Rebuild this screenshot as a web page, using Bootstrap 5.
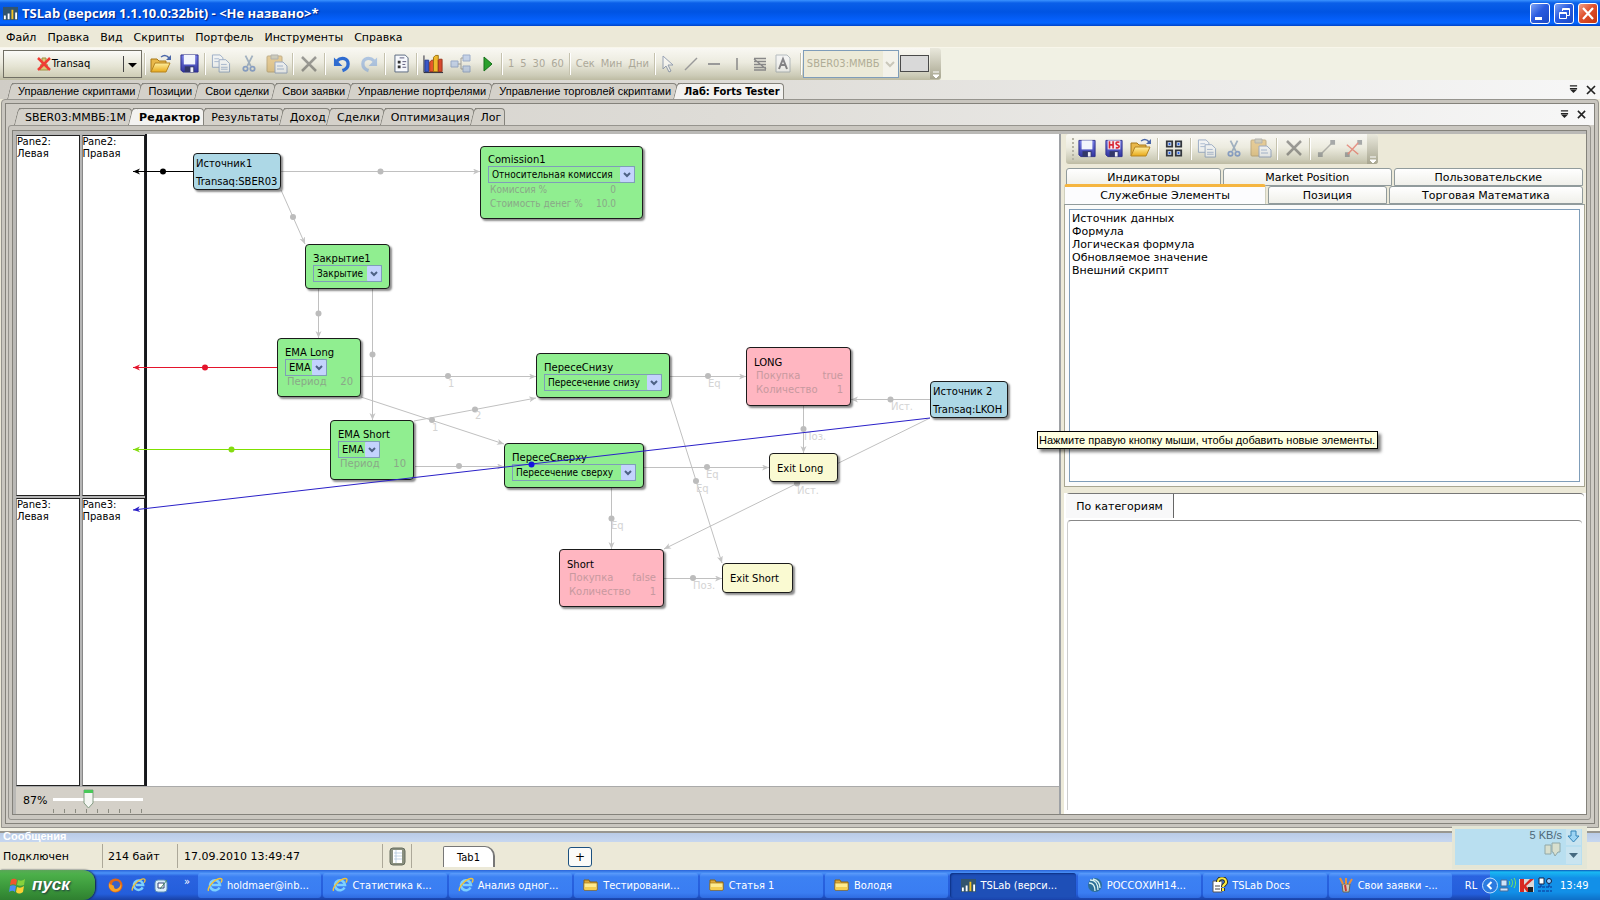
<!DOCTYPE html>
<html lang="ru">
<head>
<meta charset="utf-8">
<meta name="viewport" content="width=device-width, initial-scale=1">
<title>TSLab</title>
<link href="https://cdn.jsdelivr.net/npm/bootstrap@5.3.0/dist/css/bootstrap.min.css" rel="stylesheet">
<style>
:root{--ui:"DejaVu Sans",Verdana,sans-serif;--cond:"DejaVu Sans Condensed","DejaVu Sans",Tahoma,sans-serif;--tight:"Liberation Sans",Tahoma,sans-serif;--face:#d4d0c8;--line:#85837c}
body{font:11px/13px var(--ui);color:#000;background:#ece9d8;overflow:hidden}
button,select{font:inherit;color:inherit;background:none;border:0;padding:0;margin:0;line-height:inherit;white-space:nowrap}
a{color:inherit;text-decoration:none}
svg{display:block;flex:none}
.cond{font-family:var(--cond)}
/* title bar */
.titlebar{height:26px;background:linear-gradient(#3b93ff 0,#0a5fe8 3px,#0054e3 12px,#0560fb 20px,#0366ff 23px,#0043c8 26px);color:#fff;padding:0 2px 0 3px}
.titlebar h1{font:bold 13px/26px "Open Sans",Tahoma,sans-serif;text-shadow:1px 1px 1px #0a1f7a;margin:0}
.winbtn{width:20px;height:21px;border:1px solid #fff;border-radius:3px;background:linear-gradient(135deg,#7fa4f5,#2a5be0 45%,#1c49c4)}
.winbtn.quit{background:linear-gradient(135deg,#f0a088,#e0502c 45%,#c43510)}
/* menu + toolbar */
.menurow{height:21px;padding-left:6px;gap:11px;background:#ece9d8}
.menurow a{line-height:23px}
.toolrow{height:33px;background:#f1f1e4;border-top:1px solid #f8f6ea}
.toolgrad{background:linear-gradient(#f9f8f3,#ecebdf 45%,#cdccb8 85%,#bdbba3);border-radius:0 3px 3px 0}
.mainbar{height:32px;width:941px;padding:0 0 1px 3px}
.transaq{width:139px;height:28px;border:1px solid #716f64;background:linear-gradient(#fbfbf8,#e4e3d2 60%,#cfcdb6)}
.transaq button:first-child{flex:1;height:100%;gap:1px}
.transaq button:last-child{width:18px;height:16px;border-left:1px solid #444}
.tb{width:28px;height:28px;display:flex;align-items:center;justify-content:center}
.tb.slim{width:23px}
.tb.run{width:25px}
.vr2{width:4px;height:22px;flex:none;background:linear-gradient(90deg,transparent 1px,#c5c2ae 1px,#c5c2ae 2px,#fff 2px,#fff 3px,transparent 3px)}
.transaq + .vr2{margin-left:1px}
.off{opacity:.5}
.graytxt{color:#aca899;font-family:var(--cond)}
.symbolbox{width:96px;height:28px;border:1px solid #7f9db9;border-radius:0;appearance:none;color:#b0ad96;padding-left:3px;opacity:1;font-family:var(--cond);
 background:url("data:image/svg+xml,%3Csvg xmlns='http://www.w3.org/2000/svg' width='15' height='26'%3E%3Crect width='15' height='26' fill='%23f3f2ea'/%3E%3Cpath d='M3 11l4 4 4-4' fill='none' stroke='%23c9c7ba' stroke-width='2'/%3E%3C/svg%3E") right center no-repeat #ecead8}
.swatch{width:29px;height:17px;border:1px solid #4a4a4a;background:#d9d9d9;margin-left:1px}
.endcap{width:11px;height:100%;background:linear-gradient(#e9e8dc,#a8a690);border-radius:0 3px 3px 0}
/* skewed document tabs */
.tabstrip{background:linear-gradient(90deg,#d0cdc6,#dedcd7 45%,#f7f7f7)}
.strip1{height:19px;padding-left:11px;font-family:var(--tight)}
.strip2{height:21px;padding-left:11px}
.doctab{position:relative;height:16px;border:1px solid var(--line);border-width:1px 1px 0 0;border-radius:0 4px 0 0;padding:0 5px 0 6px;margin-left:1px;background:#d4d1ca;flex:none}
.doctab::before{content:"";position:absolute;left:-3px;top:-1px;bottom:0;width:6px;border:1px solid var(--line);border-width:1px 0 0 1px;border-radius:4px 0 0 0;transform:skewX(-14deg);background:inherit}
.doctab span{position:relative}
.doctab.active{background:#f3f2f0;font-weight:bold;z-index:1}
.strip1 .active{font-family:var(--cond);padding:0 3px 0 6px}
.strip2 .doctab{height:17px;padding:0 3px 0 6px}
.strip2 .doctab:first-child{margin-left:2px;padding-right:5px}
/* nested frames */
.frame1{border:1px solid #96948e;border-radius:4px 4px 0 0;margin:0 1px;padding:3px;background:#c9c6bf;min-height:0}
.frame2{border:1px solid #84827b;background:#d0cdc6;min-height:0}
.frame3{border:1px solid #96948e;border-radius:3px;margin:0 3px 3px 2px;padding:4px 3px 4px;background:#cac7c0;min-height:0}
.frame4{border:1px solid #84827b;padding:3px 0 0 3px;background:#bab9b6;min-height:0}
.editor{background:#fff;min-width:0;min-height:0}
.board{position:relative;overflow:hidden;min-height:0}
.panes{width:131px;display:grid;grid-template-columns:1fr 1fr;grid-template-rows:361px 1fr;gap:2px;background:#b5b5b5;border-right:2px solid #15171c;padding-top:1px;font-size:10px;line-height:12px}
.panes div{background:#fff;border:1px solid #222;border-left-color:#888}
.zoombar{height:28px;background:var(--face);border-top:1px solid #aaa;padding-left:7px}
.zoomctl{width:90px;margin-left:6px}
.zoomctl input{appearance:none;display:block;width:90px;height:20px;margin:0;background:linear-gradient(transparent 9px,#fff 9px,#fff 12px,transparent 12px)}
.zoomctl input::-webkit-slider-thumb{appearance:none;width:11px;height:20px;background:url("data:image/svg+xml,%3Csvg xmlns='http://www.w3.org/2000/svg' width='11' height='20'%3E%3Cpath d='M1 1h9v13l-4.500 5L1 14z' fill='%23f4f6f2' stroke='%23849c84'/%3E%3Cpath d='M1 1h9v3H1z' fill='%2348c858'/%3E%3C/svg%3E")}
.ticks{height:4px;background:repeating-linear-gradient(90deg,#8a8a80 0,#8a8a80 1px,transparent 1px,transparent 11px)}
/* diagram */
.wires{position:absolute;inset:0;pointer-events:none}
.wires text{font:10px var(--ui);fill:#d4d4d4}
.node{position:absolute;border:1px solid #1b1b1b;border-radius:4px;padding:7px 7px 0;font-size:10px;line-height:13px;box-shadow:2px 2px 2px rgba(0,0,0,.45);white-space:nowrap}
.op{background:#90ee90}.deal{background:#ffb6c1;padding-top:8px}.exitn{background:#fafad2;padding-top:8px}.src{background:#add8e6;padding:3px 2px 0}
.src p{margin:0 0 5px}
.node select{display:block;height:17px;width:100%;border:1px solid #7f9db9;border-radius:0;appearance:none;padding-left:3px;font-size:10px;line-height:14px;font-family:var(--cond);
 background:url("data:image/svg+xml,%3Csvg xmlns='http://www.w3.org/2000/svg' width='14' height='15'%3E%3Crect width='14' height='15' rx='1' fill='%23c3d3fd'/%3E%3Cpath d='M4 6l3 3 3-3' fill='none' stroke='%234d6185' stroke-width='2'/%3E%3C/svg%3E") right center no-repeat}
.node.ema select{width:42px;font-family:var(--ui)}
.node dl{margin:0;line-height:14px;padding:0 0 0 2px;display:grid;grid-template-columns:1fr auto}
.node dl *{margin:0;font-weight:normal;text-align:right}.node dl dt{text-align:left}
.op dl{color:#8aa888}.deal dl{color:#c7999f}
.node.ema dl{line-height:12px}
#src1{left:177px;top:19px;width:88px;height:37px}
#comm{left:464px;top:12px;width:163px;height:73px;padding-top:6px}
#comm dl{padding-right:19px;font-family:var(--cond)}
#close1{left:289px;top:110px;width:85px;height:45px}
#emaL{left:261px;top:204px;width:84px;height:59px}
#emaS{left:314px;top:286px;width:84px;height:60px}
#up{left:520px;top:219px;width:134px;height:45px}
#down{left:488px;top:309px;width:140px;height:45px}
#long{left:730px;top:213px;width:105px;height:59px}
#short{left:543px;top:415px;width:105px;height:58px}
#src2{left:914px;top:247px;width:78px;height:37px}
#exitL{left:753px;top:319px;width:69px;height:29px}
#exitS{left:706px;top:429px;width:71px;height:30px}
/* right side */
.side{width:527px;flex:none;background:#ece9d8;border-left:2px solid #9ea1a5;padding:0 0 0 3px;min-height:0}
.sidebar2{height:30px;width:312px;margin-left:2px;padding-left:6px;border-radius:3px}
.grip{width:2px;height:22px;background:repeating-linear-gradient(#b5b3a5 0,#b5b3a5 2px,transparent 2px,transparent 4px)}
.sidebar2 .tb{width:27px;height:26px;padding-bottom:2px}
.sidebar2 .vr2{margin:0 1px}
.cat{height:18px;border:1px solid #919b9c;border-radius:3px 3px 0 0;background:linear-gradient(#fff,#f0f0ea);text-align:center}
.catrow{gap:2px;padding:0 3px 0 2px}
.cat.sel{background:#fcfcfe;height:20px;margin-top:-2px;border-color:#e5972d #d0d0bf transparent;border-top:3px solid #f5b540;position:relative;flex:0 0 202px!important;line-height:15px;border-bottom:0}
.catpage{border:1px solid #a8a692;border-top-color:#919b9c;background:#fbfbfa;padding:4px;height:283px;margin-right:1px}
.items{border:1px solid #7f9db9;background:#fff;height:273px;padding:2px;margin:0;list-style:none}
.props{background:#fff;margin-top:6px;padding:0 2px;min-height:0}
.proptab{height:24px;width:108px;border-right:1px solid #666;background:#f8f8f9}
.prophead{border-top:1px solid #777;border-radius:4px}
.propbody{border-top:1px solid #888;border-left:1px solid #ccc;border-radius:4px 4px 0 0;margin:2px 2px 4px 1px}
.hint{position:absolute;left:1037px;top:431px;min-width:341px;height:18px;border:1px solid #000;background:#ffffe1;box-shadow:3px 3px 3px rgba(0,0,0,.5);padding:0 1px;line-height:16px;white-space:nowrap;z-index:5;font-family:var(--tight)}
/* bottom */
.msgs{height:14px;border-top:3px solid #f3f1e4;background:linear-gradient(#98968f 2px,#b9cbe6 2px,#c7d7f0);color:#fff;font-weight:bold;padding:0 3px;line-height:11px;font-family:var(--tight)}
.status{height:28px;background:#ece9d8}
.cell{height:24px;line-height:26px;border-right:1px solid #aca899;flex:none}
.sheet{width:52px;height:21px;background:#fff;border:1px solid #777;border-width:1px 2px 0 1px;border-radius:2px 10px 0 0;margin-left:31px;margin-bottom:3px}
.plus{width:24px;height:20px;border:1px solid #1c5180;border-radius:3px;background:#fbfbf8;margin-left:73px;margin-top:2px;font-size:12px}
.speed{position:absolute;right:13px;bottom:31px;width:135px;height:43px;background:#b9dff0;border:2px solid #e4e6d6;border-width:3px 5px 4px 3px;color:#4c6777;z-index:4;font-family:var(--tight)}
.taskbar{height:30px;background:linear-gradient(#2a63d8,#4b93f8 3px,#2a63e0 6px,#245edb 24px,#1941a5);color:#fff;font-family:var(--cond)}
.start{width:95px;height:30px;background:linear-gradient(#5aa658,#4cb04a 4px,#3b983b 18px,#2f7f30);border-radius:0 12px 12px 0;box-shadow:1px 0 2px #123;font:italic bold 17px "Liberation Sans",Arial,sans-serif;color:#fff;text-shadow:1px 1px 2px #234}
.task{flex:1 1 0;min-width:0;height:25px;margin-left:2px;border-radius:3px;background:linear-gradient(#5c9cfb,#3c81f3 4px,#3a7df2 20px,#2f6be0);padding-left:9px;gap:4px;display:flex;align-items:center;color:#fff}
.task.on{background:#1e4fb7;box-shadow:inset 1px 1px 2px #0c2f80;padding-left:11px}
.tray{width:110px;height:30px;background:linear-gradient(#0c59b9,#19b9f3 2px,#1290e8 8px,#1290e8 22px,#0e70c8);position:relative;padding-left:9px;gap:3px}
</style>
</head>
<body class="vh-100 d-flex flex-column position-relative">
<svg width="0" height="0" class="position-absolute" aria-hidden="true">
 <defs>
  <linearGradient id="gy" x2="0" y2="1"><stop stop-color="#fff0a0"/><stop offset="1" stop-color="#e8a818"/></linearGradient>
  <linearGradient id="gb" x2="0" y2="1"><stop stop-color="#7a80e8"/><stop offset="1" stop-color="#3034a0"/></linearGradient>
  <symbol id="i-open" viewBox="0 0 22 20"><path d="M1 18V5h6l2 2h7v3" fill="#e9b84a" stroke="#a87818"/><path d="M1 18L5 9h15l-4 9z" fill="url(#gy)" stroke="#b58420"/><path d="M11 3c3-2 6-2 8 1" fill="none" stroke="#4a66a8" stroke-width="1.500"/><path d="M21 1v5h-5z" fill="#4a66a8"/></symbol>
  <symbol id="i-save" viewBox="0 0 20 20"><path d="M1 1h18v18H3l-2-2z" fill="url(#gb)" stroke="#2a2c88"/><path d="M4 1h12v10H4z" fill="#f2f5fc"/><path d="M5 13h10v6H5z" fill="#333868"/><path d="M11 14h3v5h-3z" fill="#f0f0f8"/></symbol>
  <symbol id="i-savehs" viewBox="0 0 20 20"><path d="M1 1h18v18H3l-2-2z" fill="url(#gb)" stroke="#2a2c88"/><path d="M3 1h14v10H3z" fill="#f4e8ee"/><path d="M5 2v8M9 2v8M5 6h4M16 3c-4-1-5 2-2 3s2 4-2 3" fill="none" stroke="#d82838" stroke-width="1.800"/><path d="M5 13h10v6H5z" fill="#333868"/><path d="M11 14h3v5h-3z" fill="#f0f0f8"/></symbol>
  <symbol id="i-copy" viewBox="0 0 20 20"><g fill="#f2f6ff" stroke="#4b6ea8"><path d="M1 1h8l3 3v10H1z"/><path d="M8 6h7l4 4v9H8z"/></g><path d="M3 5h5M3 8h5M10 11h6M10 14h7M10 16h7" stroke="#6787c0"/></symbol>
  <symbol id="i-cut" viewBox="0 0 16 20"><path d="M4 1l6 12M12 1L6 13" stroke="#55749c" stroke-width="2" fill="none"/><g fill="none" stroke="#3460b4" stroke-width="2"><circle cx="4" cy="16" r="2.500"/><circle cx="12" cy="16" r="2.500"/></g></symbol>
  <symbol id="i-paste" viewBox="0 0 22 20"><rect x="1" y="2" width="15" height="16" rx="1" fill="#d9a648" stroke="#94712c"/><path d="M5 1h7v4H5z" fill="#aaa890" stroke="#777"/><path d="M9 8h8l4 4v7H9z" fill="#eef3ff" stroke="#526fa8"/><path d="M11 12h6M11 15h7" stroke="#6787c0"/></symbol>
  <symbol id="i-del" viewBox="0 0 18 18"><path d="M2 2l14 14M16 2L2 16" stroke="#484848" stroke-width="2.500"/></symbol>
  <symbol id="i-undo" viewBox="0 0 18 18"><path d="M4 6c5-5 12-3 12 3 0 4-3 6-6 7" fill="none" stroke="#2f6cd0" stroke-width="3.500"/><path d="M1 2v9h9z" fill="#2f6cd0"/></symbol>
  <symbol id="i-doc" viewBox="0 0 16 20"><path d="M1 1h11l3 3v15H1z" fill="#f6f8fc" stroke="#56657c"/><path d="M4 7h3v3H4zM4 12h3v3H4z" fill="#333"/><path d="M9 8h4M9 11h3M9 14h4M6 4h5" stroke="#557"/></symbol>
  <symbol id="i-chart" viewBox="0 0 22 20"><path d="M1 1v18h20" stroke="#223" fill="none"/><path d="M2 6h4v12H2z" fill="#3a57c8" stroke="#223a90"/><path d="M7 8l2-2h3v12H7z" fill="#e8552c" stroke="#97361c"/><path d="M11 3l2-2h3v17h-5z" fill="#f0b92c" stroke="#9a7010"/><path d="M16 6l1-1h3v13h-4z" fill="#d8482c" stroke="#97361c"/></symbol>
  <symbol id="i-tree" viewBox="0 0 22 20"><g fill="#9bb6e8" stroke="#4a6cb0"><path d="M1 7h7v6H1zM13 1h7v6h-7zM13 12h7v6h-7z"/></g><path d="M8 10h3M13 4h-2v11h2" fill="none" stroke="#555"/></symbol>
  <symbol id="i-grid" viewBox="0 0 20 20"><g fill="#d9e8ff" stroke="#33363c" stroke-width="2"><path d="M2 2h6v6H2zM12 2h6v6h-6zM2 12h6v6H2zM12 12h6v6h-6z"/></g><path d="M4 4h2v2H4zM14 4h2v2h-2zM4 14h2v2H4zM14 14h2v2h-2z" fill="#2f61d8"/></symbol>
  <symbol id="i-link" viewBox="0 0 20 20"><path d="M4 16L16 4" stroke="#777" stroke-width="1.500"/><path d="M1 14h5v5H1zM14 1h5v5h-5z" fill="#5e646c"/></symbol>
  <symbol id="i-folder" viewBox="0 0 16 14"><path d="M1 12V2h5l1 2h7v8z" fill="#dca838" stroke="#8c6510"/><path d="M1 12V5h13v7z" fill="#fdeb90" stroke="#a87c1c" stroke-width=".7"/><path d="M2 9h11v3H2z" fill="#f4ce50"/></symbol>
  <symbol id="i-ie" viewBox="0 0 16 16"><path d="M12.500 10.500A5 5 0 1 1 13 8H5" fill="none" stroke="#7cd0ff" stroke-width="2.600"/><path d="M1.500 14C0 10 8 2 13 1.500c3-.2 2 2.500 1 4" fill="none" stroke="#f0c33a" stroke-width="1.400"/></symbol>
  <symbol id="i-app" viewBox="0 0 16 16"><path d="M0 1h16v14H0z" fill="#32546e"/><path d="M1 10h2v4H1zM5 8h2v6H5zM13 7h2v7h-2z" fill="#fff"/><path d="M9 4h2v10H9z" fill="#f2c325"/></symbol>
  <symbol id="i-drop" viewBox="0 0 10 10"><path d="M1 1h8M1 4h8" stroke="#222" stroke-width="1.500"/><path d="M1 5h8L5 9z" fill="#222"/></symbol>
  <symbol id="i-x" viewBox="0 0 10 10"><path d="M1 1l8 8M9 1L1 9" stroke="#222" stroke-width="1.700"/></symbol>
  <symbol id="i-more" viewBox="0 0 11 11"><path d="M3 4h6M3 7h6l-3 3z" stroke="#fff" fill="#fff"/></symbol>
 </defs>
</svg>

<header class="titlebar d-flex align-items-center">
 <svg width="15" height="15"><use href="#i-app"/></svg>
 <h1 class="ms-1 flex-grow-1">TSLab (версия 1.1.10.0:32bit) - &lt;Не названо&gt;*</h1>
 <div class="d-flex gap-1">
  <button class="winbtn" aria-label="Свернуть"><svg width="18" height="19"><path d="M4 13h7v3H4z" fill="#fff"/></svg></button>
  <button class="winbtn" aria-label="Восстановить"><svg width="18" height="19" fill="none" stroke="#fff"><path d="M7.500 7V4.500h7v7H12M7 5.500h7"/><path d="M4.500 8.500h7v6h-7zM4 9.500h8"/></svg></button>
  <button class="winbtn quit" aria-label="Закрыть"><svg width="18" height="19"><path d="M4 4l10 11M14 4L4 15" stroke="#fff" stroke-width="2.200"/></svg></button>
 </div>
</header>

<nav class="menurow d-flex">
 <a href="#">Файл</a><a href="#">Правка</a><a href="#">Вид</a><a href="#">Скрипты</a><a href="#">Портфель</a><a href="#">Инструменты</a><a href="#">Справка</a>
</nav>

<div class="toolrow">
 <div class="toolgrad mainbar d-flex align-items-center">
  <div class="transaq d-flex align-items-center">
   <button class="d-flex align-items-center justify-content-center cond"><svg width="14" height="16"><path d="M5 2h4v5H5zM4 8h6l1 6H3z" fill="#d8c878" stroke="#a09040"/><path d="M1 2l12 12M13 2L1 14" stroke="#f03c34" stroke-width="2.500"/></svg>Transaq</button>
   <button aria-label="Меню подключения"><svg width="16" height="14"><path d="M4 6h9l-4.500 4.500z"/></svg></button>
  </div>
  <span class="vr2"></span>
  <button class="tb" aria-label="Открыть"><svg width="22" height="20"><use href="#i-open"/></svg></button>
  <button class="tb" aria-label="Сохранить"><svg width="19" height="19"><use href="#i-save"/></svg></button>
  <span class="vr2"></span>
  <button class="tb off" aria-label="Копировать"><svg width="20" height="19"><use href="#i-copy"/></svg></button>
  <button class="tb off" aria-label="Вырезать"><svg width="14" height="19"><use href="#i-cut"/></svg></button>
  <button class="tb off" aria-label="Вставить"><svg width="22" height="20"><use href="#i-paste"/></svg></button>
  <span class="vr2"></span>
  <button class="tb off" aria-label="Удалить"><svg width="18" height="18"><use href="#i-del"/></svg></button>
  <span class="vr2"></span>
  <button class="tb" aria-label="Отменить"><svg width="17" height="18"><use href="#i-undo"/></svg></button>
  <button class="tb off" aria-label="Повторить"><svg width="17" height="18" viewBox="0 0 18 18"><path d="M14 6C9 1 2 3 2 9c0 4 3 6 6 7" fill="none" stroke="#6f9bdc" stroke-width="3.500"/><path d="M17 2v9H8z" fill="#6f9bdc"/></svg></button>
  <span class="vr2"></span>
  <button class="tb" aria-label="Свойства"><svg width="15" height="19"><use href="#i-doc"/></svg></button>
  <span class="vr2"></span>
  <button class="tb" aria-label="График"><svg width="21" height="20"><use href="#i-chart"/></svg></button>
  <button class="tb off" aria-label="Схема"><svg width="22" height="20"><use href="#i-tree"/></svg></button>
  <button class="tb run" aria-label="Запуск"><svg width="10" height="16"><path d="M1 1l8 7-8 7z" fill="#2aa02c" stroke="#147018"/></svg></button>
  <span class="vr2"></span>
  <div class="d-flex graytxt ps-1" style="gap:6px"><button>1</button><button>5</button><button>30</button><button>60</button></div>
  <span class="vr2 ms-1"></span>
  <div class="d-flex graytxt ps-1" style="gap:6px"><button>Сек</button><button>Мин</button><button>Дни</button></div>
  <span class="vr2 ms-1"></span>
  <button class="tb slim off" aria-label="Указатель"><svg width="14" height="18"><path d="M2 1v13l3-3 3 6 2-1-3-6h5z" fill="#fff" stroke="#445a88"/></svg></button>
  <button class="tb slim" aria-label="Линия"><svg width="14" height="14"><path d="M1 13L13 1" stroke="#999" stroke-width="1.500"/></svg></button>
  <button class="tb slim" aria-label="Горизонталь"><svg width="14" height="14"><path d="M1 7h12" stroke="#999" stroke-width="2"/></svg></button>
  <button class="tb slim" aria-label="Вертикаль"><svg width="4" height="14"><path d="M2 1v12" stroke="#888" stroke-width="1.500"/></svg></button>
  <button class="tb slim" aria-label="Фибоначчи"><svg width="14" height="14"><path d="M1 1.500h12M1 4.500h12M1 7.500h12M1 10.500h12M1 13h12M1 2l12 10" stroke="#888" stroke-width="1.300"/></svg></button>
  <button class="tb slim off" aria-label="Текст"><svg width="16" height="19"><path d="M1 1h11l3 3v14H1z" fill="#f6f8ff" stroke="#7a8898"/><path d="M4 15l4-10 4 10M5 11h6" fill="none" stroke="#223" stroke-width="2"/></svg></button>
  <span class="vr2 ms-1"></span>
  <select class="symbolbox" disabled aria-label="Инструмент"><option>SBER03:ММВБ</option></select>
  <button class="swatch" aria-label="Цвет"></button>
  <div class="endcap ms-auto d-flex align-items-end"><svg width="11" height="11"><use href="#i-more"/></svg></div>
 </div>
</div>

<div class="tabstrip strip1 d-flex align-items-end">
 <button class="doctab"><span>Управление скриптами</span></button><button class="doctab"><span>Позиции</span></button><button class="doctab"><span>Свои сделки</span></button><button class="doctab"><span>Свои заявки</span></button><button class="doctab"><span>Управление портфелями</span></button><button class="doctab"><span>Управление торговлей скриптами</span></button><button class="doctab active"><span>Лаб: Forts Tester</span></button>
 <div class="ms-auto d-flex gap-2 pe-1 align-self-center"><button aria-label="Список"><svg width="9" height="9"><use href="#i-drop"/></svg></button><button aria-label="Закрыть"><svg width="10" height="10"><use href="#i-x"/></svg></button></div>
</div>

<main class="frame1 flex-grow-1 d-flex flex-column">
 <div class="frame2 flex-grow-1 d-flex flex-column">
  <div class="tabstrip strip2 d-flex align-items-end">
   <button class="doctab"><span>SBER03:ММВБ:1М</span></button><button class="doctab active"><span>Редактор</span></button><button class="doctab"><span>Результаты</span></button><button class="doctab"><span>Доход</span></button><button class="doctab"><span>Сделки</span></button><button class="doctab"><span>Оптимизация</span></button><button class="doctab"><span>Лог</span></button>
   <div class="ms-auto d-flex gap-2 pe-2 align-self-center"><button aria-label="Список"><svg width="9" height="9"><use href="#i-drop"/></svg></button><button aria-label="Закрыть"><svg width="9" height="9"><use href="#i-x"/></svg></button></div>
  </div>
  <div class="frame3 flex-grow-1 d-flex flex-column">
   <div class="frame4 flex-grow-1 d-flex">
    <section class="editor flex-grow-1 d-flex flex-column">
     <div class="board flex-grow-1 d-flex">
      <div class="panes"><div>Pane2:<br>Левая</div><div>Pane2:<br>Правая</div><div>Pane3:<br>Левая</div><div>Pane3:<br>Правая</div></div>
      <svg class="wires w-100 h-100">
       <defs>
        <marker id="m-g" markerUnits="userSpaceOnUse" markerWidth="9" markerHeight="8" refX="7" refY="3" orient="auto"><path d="M0 0l7 3-7 3 2-3z" fill="#c4c4c4"/></marker>
        <marker id="m-k" markerUnits="userSpaceOnUse" markerWidth="9" markerHeight="8" refX="7" refY="3" orient="auto"><path d="M0 0l7 3-7 3 2-3z" fill="#000"/></marker>
        <marker id="m-r" markerUnits="userSpaceOnUse" markerWidth="9" markerHeight="8" refX="7" refY="3" orient="auto"><path d="M0 0l7 3-7 3 2-3z" fill="#e4142c"/></marker>
        <marker id="m-l" markerUnits="userSpaceOnUse" markerWidth="9" markerHeight="8" refX="7" refY="3" orient="auto"><path d="M0 0l7 3-7 3 2-3z" fill="#84dc10"/></marker>
        <marker id="m-b" markerUnits="userSpaceOnUse" markerWidth="9" markerHeight="8" refX="7" refY="3" orient="auto"><path d="M0 0l7 3-7 3 2-3z" fill="#2a20c8"/></marker>
       </defs>
       <g transform="translate(-16 -134)">
        <g stroke="#c0c0c0" fill="none">
         <path marker-end="url(#m-g)" d="M281 171.500H480"/><path marker-end="url(#m-g)" d="M281 190L305 244"/><path marker-end="url(#m-g)" d="M318.500 289V338"/><path marker-end="url(#m-g)" d="M372.500 289V420"/><path marker-end="url(#m-g)" d="M361 376.500H536"/><path marker-end="url(#m-g)" d="M361 397L504 444"/><path marker-end="url(#m-g)" d="M414 421L536 398"/><path marker-end="url(#m-g)" d="M415 466.500H504"/><path marker-end="url(#m-g)" d="M670 376.500H746"/><path marker-end="url(#m-g)" d="M670 398L722 563"/><path marker-end="url(#m-g)" d="M644 467.500H769"/><path marker-end="url(#m-g)" d="M611.500 488V549"/><path marker-end="url(#m-g)" d="M930 399.500H851"/><path marker-end="url(#m-g)" d="M803.500 406V453"/><path marker-end="url(#m-g)" d="M930 418L664 549"/><path marker-end="url(#m-g)" d="M664 578.500H722"/>
        </g>
        <g fill="#bcbcbc"><circle cx="380.500" cy="171.500" r="3"/><circle cx="293" cy="217" r="3"/><circle cx="318.500" cy="313.500" r="3"/><circle cx="372.500" cy="354.500" r="3"/><circle cx="448" cy="376" r="3"/><circle cx="432" cy="420" r="3"/><circle cx="475" cy="409.500" r="3"/><circle cx="459" cy="466" r="3"/><circle cx="708" cy="376" r="3"/><circle cx="696" cy="481" r="3"/><circle cx="707" cy="467" r="3"/><circle cx="611.500" cy="518.500" r="3"/><circle cx="890.500" cy="399.500" r="3"/><circle cx="803.500" cy="429" r="3"/><circle cx="797" cy="483.500" r="3"/><circle cx="693" cy="578" r="3"/></g>
        <text x="448" y="387">1</text><text x="432" y="431">1</text><text x="475" y="419">2</text><text x="708" y="387">Eq</text><text x="696" y="492">Eq</text><text x="706" y="478">Eq</text><text x="611" y="529">Eq</text><text x="891" y="410">Ист.</text><text x="804" y="440">Поз.</text><text x="797" y="494">Ист.</text><text x="693" y="589">Поз.</text>
        <path marker-end="url(#m-k)" stroke="#000" d="M193 171.500H133"/><circle cx="163" cy="171.500" r="3"/>
        <path marker-end="url(#m-r)" stroke="#e4142c" d="M277 367.500H133"/><circle cx="205" cy="367.500" r="3" fill="#e4142c"/>
        <path marker-end="url(#m-l)" stroke="#7fe000" d="M330 449.500H133"/><circle cx="231.500" cy="449.500" r="3" fill="#84dc10"/>
       </g>
      </svg>
      <div class="node src" id="src1"><p>Источник1</p><p>Transaq:SBER03</p></div>
      <div class="node op" id="comm"><label for="s1" class="d-block">Comission1</label><select id="s1"><option>Относительная комиссия</option></select><dl><dt>Комиссия %</dt><dd>0</dd><dt>Стоимость денег %</dt><dd>10.0</dd></dl></div>
      <div class="node op" id="close1"><label for="s2" class="d-block">Закрытие1</label><select id="s2"><option>Закрытие</option></select></div>
      <div class="node op ema" id="emaL"><label for="s3" class="d-block">EMA Long</label><select id="s3"><option>EMA</option></select><dl><dt>Период</dt><dd>20</dd></dl></div>
      <div class="node op ema" id="emaS"><label for="s4" class="d-block">EMA Short</label><select id="s4"><option>EMA</option></select><dl><dt>Период</dt><dd>10</dd></dl></div>
      <div class="node op" id="up"><label for="s5" class="d-block">ПересеСнизу</label><select id="s5"><option>Пересечение снизу</option></select></div>
      <div class="node op" id="down"><label for="s6" class="d-block">ПересеСверху</label><select id="s6"><option>Пересечение сверху</option></select></div>
      <div class="node deal" id="long">LONG<dl><dt>Покупка</dt><dd>true</dd><dt>Количество</dt><dd>1</dd></dl></div>
      <div class="node deal" id="short">Short<dl><dt>Покупка</dt><dd>false</dd><dt>Количество</dt><dd>1</dd></dl></div>
      <div class="node src" id="src2"><p>Источник 2</p><p>Transaq:LKOH</p></div>
      <div class="node exitn" id="exitL">Exit Long</div>
      <div class="node exitn" id="exitS">Exit Short</div>
      <svg class="wires w-100 h-100"><g transform="translate(-16 -134)"><path marker-end="url(#m-b)" stroke="#2a20c8" d="M930 418L133 510"/><circle cx="531.500" cy="464.500" r="3" fill="#1414e0"/></g></svg>
     </div>
     <div class="zoombar d-flex align-items-center"><label for="zoom">87%</label><div class="zoomctl"><input id="zoom" type="range" min="0" max="200" value="75"><div class="ticks"></div></div></div>
    </section>

    <aside class="side d-flex flex-column">
     <div class="toolgrad sidebar2 d-flex align-items-center flex-shrink-0">
      <span class="grip"></span>
      <button class="tb" aria-label="Сохранить"><svg width="18" height="19"><use href="#i-save"/></svg></button>
      <button class="tb" aria-label="Сохранить HS"><svg width="18" height="19"><use href="#i-savehs"/></svg></button>
      <button class="tb" aria-label="Открыть"><svg width="22" height="20"><use href="#i-open"/></svg></button>
      <span class="vr2"></span>
      <button class="tb" aria-label="Сетка"><svg width="18" height="19"><use href="#i-grid"/></svg></button>
      <span class="vr2"></span>
      <button class="tb off" aria-label="Копировать"><svg width="20" height="19"><use href="#i-copy"/></svg></button>
      <button class="tb off" aria-label="Вырезать"><svg width="14" height="19"><use href="#i-cut"/></svg></button>
      <button class="tb off" aria-label="Вставить"><svg width="22" height="20"><use href="#i-paste"/></svg></button>
      <span class="vr2"></span>
      <button class="tb off" aria-label="Удалить"><svg width="18" height="18"><use href="#i-del"/></svg></button>
      <span class="vr2"></span>
      <button class="tb off" aria-label="Связать"><svg width="19" height="19"><use href="#i-link"/></svg></button>
      <button class="tb off" aria-label="Разорвать"><svg width="19" height="19" viewBox="0 0 20 20"><path d="M1 14h5v5H1zM14 1h5v5h-5z" fill="#5e646c"/><path d="M3 6l12 10M15 4L4 16" stroke="#e03c2c" stroke-width="1.500"/></svg></button>
      <div class="endcap ms-auto d-flex align-items-end"><svg width="11" height="11"><use href="#i-more"/></svg></div>
     </div>
     <div class="catrow d-flex flex-shrink-0 mt-1"><button class="cat" style="flex:155">Индикаторы</button><button class="cat" style="flex:169">Market Position</button><button class="cat" style="flex:190">Пользовательские</button></div>
     <div class="catrow d-flex flex-shrink-0 ps-0"><button class="cat sel">Служебные Элементы</button><button class="cat" style="flex:119">Позиция</button><button class="cat" style="flex:196">Торговая Математика</button></div>
     <div class="catpage flex-shrink-0"><ul class="items"><li>Источник данных</li><li>Формула</li><li>Логическая формула</li><li>Обновляемое значение</li><li>Внешний скрипт</li></ul></div>
     <div class="props flex-grow-1 d-flex flex-column"><div class="prophead"><button class="proptab">По категориям</button></div><div class="propbody flex-grow-1"></div></div>
    </aside>
   </div>
  </div>
 </div>
</main>
<div class="hint" role="tooltip">Нажмите правую кнопку мыши, чтобы добавить новые элементы.</div>

<div class="msgs">Сообщения</div>
<footer class="status d-flex align-items-center">
 <div class="cell" style="width:103px;padding-left:3px">Подключен</div><div class="cell" style="width:75px;padding-left:5px">214 байт</div><div class="cell" style="width:205px;padding-left:6px">17.09.2010 13:49:47</div>
 <div class="cell d-flex align-items-center justify-content-center" style="width:29px"><button aria-label="Журнал"><svg width="17" height="19"><rect x="1" y="1" width="15" height="17" rx="3" fill="#8a9080" stroke="#666c5e"/><path d="M4 3h9v13H4z" fill="#fff"/><path d="M5 6h8M5 9h8M5 12h8M7 3v13" stroke="#a8c0d8" stroke-width=".7"/></svg></button></div>
 <button class="sheet cond align-self-end">Tab1</button>
 <button class="plus">+</button>
</footer>
<div class="speed d-flex justify-content-end"><div class="pe-1 text-end">5 KB/s<svg class="ms-auto" width="18" height="15"><path d="M1 3h6v9H1zM8 1h8v9h-2l-3 4-2-4H8z" fill="#d8dfce" stroke="#90a8a8"/></svg></div>
 <div><svg width="16" height="36"><path d="M0 0h15v16H0zM0 18h15v17H0z" fill="#c9e4f0"/><path d="M5 2h5v5h3l-5.500 6L2 7h3z" fill="#9cd4f4" stroke="#3484b8"/><path d="M3 24h9l-4.500 5z" fill="#456a80"/></svg></div></div>

<nav class="taskbar d-flex align-items-center">
 <button class="start d-flex align-items-center ps-2"><svg class="me-1" width="20" height="19"><path d="M3 4c3-2 4-1 6 0L8 9C6 8 5 8 2 9z" fill="#f0562c"/><path d="M10 4c3 1 4 1 7-1l-1 6c-3 1-5 1-7 0z" fill="#86d23c"/><path d="M2 10c2-1 4-1 6 0l-1 6c-2-2-4-1-6 0z" fill="#4c8cf4"/><path d="M9 11c3 1 4 1 7-1l-1 6c-3 2-5 2-7 0z" fill="#fcd034"/></svg>пуск</button>
 <div class="d-flex align-items-center" style="width:101px;padding-left:13px;gap:8px">
  <a href="#" aria-label="Firefox"><svg width="15" height="15"><circle cx="7.500" cy="7.500" r="7" fill="#e06818"/><circle cx="8" cy="7" r="4" fill="#3a62c8"/><path d="M1 5c2 3 5 1 5 4s5 3 7-3c2 8-9 11-12 3z" fill="#f8a428"/></svg></a>
  <a href="#" aria-label="Internet Explorer"><svg width="15" height="16"><use href="#i-ie"/></svg></a>
  <a href="#" aria-label="Рабочий стол"><svg width="14" height="15"><rect x="1" y="2" width="12" height="12" rx="3" fill="#d8ecfa" stroke="#6090b8"/><path d="M4 5h6v5H4z" fill="#fff" stroke="#347"/><path d="M6 11l7-9" stroke="#486"/></svg></a>
  <span class="ms-2 mb-2">»</span>
 </div>
 <a class="task" href="#"><svg width="16" height="16"><use href="#i-ie"/></svg>holdmaer@inb...</a>
 <a class="task" href="#"><svg width="16" height="16"><use href="#i-ie"/></svg>Статистика к...</a>
 <a class="task" href="#"><svg width="16" height="16"><use href="#i-ie"/></svg>Анализ одног...</a>
 <a class="task" href="#"><svg width="16" height="14"><use href="#i-folder"/></svg>Тестировани...</a>
 <a class="task" href="#"><svg width="16" height="14"><use href="#i-folder"/></svg>Статья 1</a>
 <a class="task" href="#"><svg width="16" height="14"><use href="#i-folder"/></svg>Володя</a>
 <a class="task on" href="#"><svg width="15" height="15"><use href="#i-app"/></svg>TSLab (верси...</a>
 <a class="task" href="#"><svg width="16" height="16" fill="none"><circle cx="8" cy="8" r="7" fill="#2c6f98"/><path d="M3 3c5 0 8 4 8 10M6 2c5 1 7 5 7 9M2 6c4 0 6 3 6 8" stroke="#d8f0f0" stroke-width="1.300"/></svg>РОССОХИН14...</a>
 <a class="task" href="#"><svg width="16" height="16"><path d="M1 4h9v11H1z" fill="#fff" stroke="#555"/><path d="M3 9h5M3 12h5" stroke="#444"/><path d="M6 5c0-5 8-5 8 0 0 3-3 2-3 5M11 11v3" fill="none" stroke="#222" stroke-width="4"/><path d="M6 5c0-5 8-5 8 0 0 3-3 2-3 5M11 11v3" fill="none" stroke="#f8e840" stroke-width="2.200"/></svg>TSLab Docs</a>
 <a class="task" href="#"><svg width="16" height="16"><path d="M4 7h8l-1 8H5z" fill="#cfc8b8" stroke="#665"/><path d="M5 7L2 1M8 7V1M11 7l3-5" stroke="#e89038" stroke-width="2"/><path d="M7 8l1 6" stroke="#c83838" stroke-width="2"/></svg>Свои заявки -...</a>
 <div class="text-center" style="width:38px">RL</div>
 <div class="tray d-flex align-items-center"><button class="position-absolute start-0 translate-middle-x" aria-label="Показать значки"><svg width="17" height="17"><circle cx="8.500" cy="8.500" r="7.500" fill="#2b7be0" stroke="#bfe0ff"/><path d="M10 5L6.500 8.500 10 12" fill="none" stroke="#fff" stroke-width="2"/></svg></button>
  <svg width="17" height="16"><path d="M2 3h6v6H2zM1 11h8v3H1z" fill="#d0e4f8" stroke="#486a98"/><path d="M10 4c1 1 1 3 0 4M12 2c2 2 2 5 0 8M15 1c2 3 2 7 0 10" stroke="#7ce85c" fill="none"/></svg>
  <svg width="15" height="15"><path d="M0 1h15v13H0z" fill="#d8d8d8"/><path d="M1 1h4v6l6-6h4L7 8l6 6H8L5 10v4H1z" fill="#d82820"/><path d="M9 9h5v5H9z" fill="#222"/></svg>
  <svg width="16" height="16"><path d="M2 1h5v6H2z" fill="#fff" stroke="#124"/><circle cx="12" cy="4" r="2.500" fill="#9cf" stroke="#124"/><path d="M1 10h14M4 10V7M12 10V7M1 14h14" stroke="#0a2f90" stroke-dasharray="3 1"/></svg>
  <span class="ms-1">13:49</span></div>
</nav>
<script src="https://cdn.jsdelivr.net/npm/bootstrap@5.3.0/dist/js/bootstrap.bundle.min.js"></script>
</body>
</html>
